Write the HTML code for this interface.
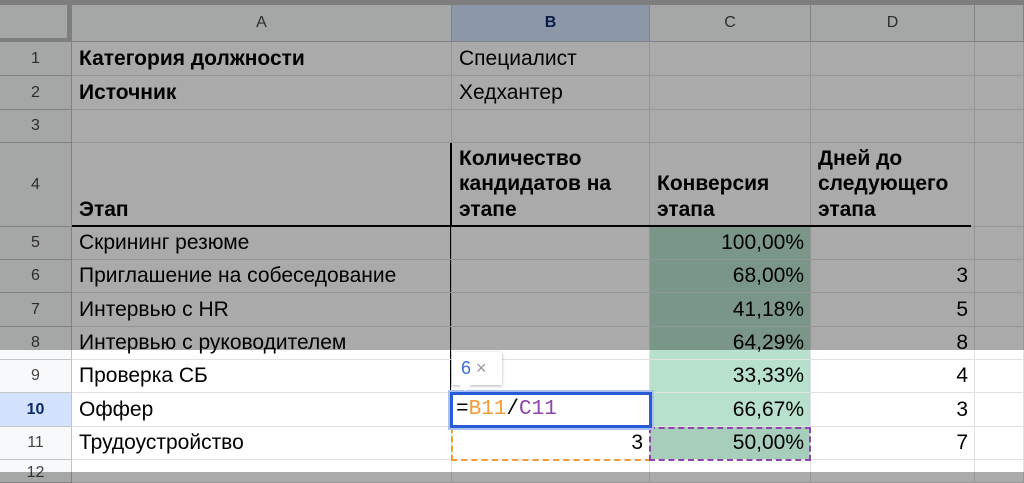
<!DOCTYPE html>
<html><head><meta charset="utf-8"><style>
*{box-sizing:border-box;margin:0;padding:0}
html,body{width:1024px;height:483px;overflow:hidden}
body{background:#fff;font-family:"Liberation Sans",Arial,sans-serif;position:relative}
.c{position:absolute;border-right:1px solid #e1e1e1;border-bottom:1px solid #e1e1e1;display:flex;align-items:flex-end;padding:0 6px 4px 7px;font-size:21px;color:#000;line-height:24px;white-space:nowrap;overflow:visible}
.r{justify-content:flex-end}
.b{font-weight:bold}
.h{position:absolute;background:#f8f9fa;border-right:1px solid #c4c4c4;border-bottom:1px solid #c4c4c4;display:flex;align-items:center;justify-content:center;font-size:16px;color:#444}
.g{background:#b7e1cd}
.ov{position:absolute;left:0;width:1024px;background:rgba(0,0,0,0.335)}
</style></head><body>
<div style="position:absolute;left:0;top:0;width:1024px;height:5px;background:#bdbdbd"></div>
<div class="h" style="left:0;top:5px;width:72px;height:37px;border-right:5px solid #bdbdbd;border-bottom:4px solid #bdbdbd"></div>
<div class="h" style="left:72px;top:5px;width:380px;height:37px">A</div>
<div class="h" style="left:452px;top:5px;width:198px;height:37px;background:#d3e3fd;color:#0b2a6b;font-weight:bold">B</div>
<div class="h" style="left:650px;top:5px;width:161px;height:37px">C</div>
<div class="h" style="left:811px;top:5px;width:164px;height:37px">D</div>
<div class="h" style="left:975px;top:5px;width:49px;height:37px"></div>

<div class="h" style="left:0;top:42px;width:72px;height:34px">1</div>
<div class="h" style="left:0;top:76px;width:72px;height:34px">2</div>
<div class="h" style="left:0;top:110px;width:72px;height:33px">3</div>
<div class="h" style="left:0;top:143px;width:72px;height:84px">4</div>
<div class="h" style="left:0;top:227px;width:72px;height:33px">5</div>
<div class="h" style="left:0;top:260px;width:72px;height:33px">6</div>
<div class="h" style="left:0;top:293px;width:72px;height:34px">7</div>
<div class="h" style="left:0;top:327px;width:72px;height:33px">8</div>
<div class="h" style="left:0;top:360px;width:72px;height:33px">9</div>
<div class="h" style="left:0;top:393px;width:72px;height:34px;background:#d3e3fd;color:#0b2a6b;font-weight:bold">10</div>
<div class="h" style="left:0;top:427px;width:72px;height:33px">11</div>
<div class="h" style="left:0;top:460px;width:72px;height:23px;align-items:flex-start;padding-top:4px">12</div>

<div class="c b" style="left:72px;top:42px;width:380px;height:34px">Категория должности</div>
<div class="c" style="left:452px;top:42px;width:198px;height:34px">Специалист</div>
<div class="c" style="left:650px;top:42px;width:161px;height:34px"></div>
<div class="c" style="left:811px;top:42px;width:164px;height:34px"></div>
<div class="c" style="left:975px;top:42px;width:49px;height:34px"></div>
<div class="c b" style="left:72px;top:76px;width:380px;height:34px">Источник</div>
<div class="c" style="left:452px;top:76px;width:198px;height:34px">Хедхантер</div>
<div class="c" style="left:650px;top:76px;width:161px;height:34px"></div>
<div class="c" style="left:811px;top:76px;width:164px;height:34px"></div>
<div class="c" style="left:975px;top:76px;width:49px;height:34px"></div>
<div class="c" style="left:72px;top:110px;width:380px;height:33px"></div>
<div class="c" style="left:452px;top:110px;width:198px;height:33px"></div>
<div class="c" style="left:650px;top:110px;width:161px;height:33px"></div>
<div class="c" style="left:811px;top:110px;width:164px;height:33px"></div>
<div class="c" style="left:975px;top:110px;width:49px;height:33px"></div>
<div class="c b" style="left:72px;top:143px;width:380px;height:84px;line-height:25.5px">Этап</div>
<div class="c b" style="left:452px;top:143px;width:198px;height:84px;line-height:25.5px;white-space:normal">Количество кандидатов на этапе</div>
<div class="c b" style="left:650px;top:143px;width:161px;height:84px;line-height:25.5px;white-space:normal">Конверсия этапа</div>
<div class="c b" style="left:811px;top:143px;width:164px;height:84px;line-height:25.5px;white-space:normal">Дней до следующего этапа</div>
<div class="c" style="left:975px;top:143px;width:49px;height:84px"></div>
<div style="position:absolute;left:72px;top:225px;width:899px;height:2px;background:#000"></div>
<div style="position:absolute;left:450px;top:143px;width:2px;height:250px;background:#000"></div>

<div class="c" style="left:72px;top:227px;width:380px;height:33px">Скрининг резюме</div>
<div class="c" style="left:452px;top:227px;width:198px;height:33px"></div>
<div class="c r g" style="left:650px;top:227px;width:161px;height:33px">100,00%</div>
<div class="c r" style="left:811px;top:227px;width:164px;height:33px"></div>
<div class="c" style="left:975px;top:227px;width:49px;height:33px"></div>

<div class="c" style="left:72px;top:260px;width:380px;height:33px">Приглашение на собеседование</div>
<div class="c" style="left:452px;top:260px;width:198px;height:33px"></div>
<div class="c r g" style="left:650px;top:260px;width:161px;height:33px">68,00%</div>
<div class="c r" style="left:811px;top:260px;width:164px;height:33px">3</div>
<div class="c" style="left:975px;top:260px;width:49px;height:33px"></div>

<div class="c" style="left:72px;top:293px;width:380px;height:34px">Интервью с HR</div>
<div class="c" style="left:452px;top:293px;width:198px;height:34px"></div>
<div class="c r g" style="left:650px;top:293px;width:161px;height:34px">41,18%</div>
<div class="c r" style="left:811px;top:293px;width:164px;height:34px">5</div>
<div class="c" style="left:975px;top:293px;width:49px;height:34px"></div>

<div class="c" style="left:72px;top:327px;width:380px;height:33px">Интервью с руководителем</div>
<div class="c" style="left:452px;top:327px;width:198px;height:33px"></div>
<div class="c r g" style="left:650px;top:327px;width:161px;height:33px">64,29%</div>
<div class="c r" style="left:811px;top:327px;width:164px;height:33px">8</div>
<div class="c" style="left:975px;top:327px;width:49px;height:33px"></div>

<div class="c" style="left:72px;top:360px;width:380px;height:33px">Проверка СБ</div>
<div class="c" style="left:452px;top:360px;width:198px;height:33px"></div>
<div class="c r g" style="left:650px;top:360px;width:161px;height:33px">33,33%</div>
<div class="c r" style="left:811px;top:360px;width:164px;height:33px">4</div>
<div class="c" style="left:975px;top:360px;width:49px;height:33px"></div>

<div class="c" style="left:72px;top:393px;width:380px;height:34px">Оффер</div>
<div class="c" style="left:452px;top:393px;width:198px;height:34px"></div>
<div class="c r g" style="left:650px;top:393px;width:161px;height:34px">66,67%</div>
<div class="c r" style="left:811px;top:393px;width:164px;height:34px">3</div>
<div class="c" style="left:975px;top:393px;width:49px;height:34px"></div>

<div class="c" style="left:72px;top:427px;width:380px;height:33px">Трудоустройство</div>
<div class="c r" style="left:452px;top:427px;width:198px;height:33px">3</div>
<div class="c r" style="left:650px;top:427px;width:161px;height:33px;background:#a7cdbb">50,00%</div>
<div class="c r" style="left:811px;top:427px;width:164px;height:33px">7</div>
<div class="c" style="left:975px;top:427px;width:49px;height:33px"></div>

<div class="c" style="left:72px;top:460px;width:380px;height:23px"></div>
<div class="c" style="left:452px;top:460px;width:198px;height:23px"></div>
<div class="c" style="left:650px;top:460px;width:161px;height:23px"></div>
<div class="c" style="left:811px;top:460px;width:164px;height:23px"></div>
<div class="c" style="left:975px;top:460px;width:49px;height:23px"></div>

<div style="position:absolute;left:451px;top:427px;width:200px;height:34px;border:2px dashed #f29c38"></div>
<div style="position:absolute;left:649px;top:427px;width:162px;height:34px;border:2px dashed #8e44ad"></div>

<div style="position:absolute;left:448px;top:390px;width:206px;height:40px;border:2px solid #a8c1f0"></div>
<div style="position:absolute;left:450px;top:392px;width:202px;height:36px;border:3px solid #2a5bd7;background:#fff;font-family:'Liberation Mono',monospace;font-size:21px;line-height:30px;padding-left:3px;white-space:nowrap">=<span style="color:#f29c38">B11</span>/<span style="color:#8e44ad">C11</span></div>

<div class="ov" style="top:0;height:350px"></div>
<div class="ov" style="top:472px;height:11px"></div>

<div style="position:absolute;left:452px;top:352px;width:50px;height:33px;background:#fff;box-shadow:0 1px 3px rgba(0,0,0,.3);font-size:18px;line-height:33px;padding-left:9px;white-space:nowrap"><span style="color:#3b6fd6">6</span> <span style="color:#999">×</span></div>
<div style="position:absolute;left:458px;top:384px;width:0;height:0;border-left:7px solid transparent;border-right:7px solid transparent;border-top:7px solid #fff"></div>
</body></html>
